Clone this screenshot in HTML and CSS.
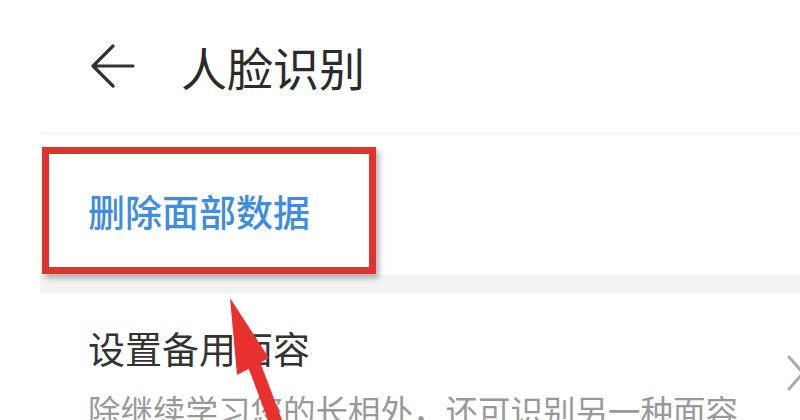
FILE: index.html
```html
<!DOCTYPE html>
<html lang="zh">
<head>
<meta charset="utf-8">
<link rel="stylesheet" href="styles.css">
</head>
<body>
<div class="page">
  <header class="header">
    <svg class="back" width="44" height="46" viewBox="0 0 44 46">
      <path d="M22 3 L2 23 L22 43 M2 23 L42 23" fill="none" stroke="#333" stroke-width="3.2" stroke-linecap="round" stroke-linejoin="round"/>
    </svg>
    <h1 class="title">人脸识别</h1>
  </header>
  <section class="card">
    <div class="action">删除面部数据</div>
  </section>
  <div class="band"></div>
  <section class="row">
    <div class="texts">
      <div class="row-title">设置备用面容</div>
      <div class="row-sub">除继续学习您的长相外，还可识别另一种面容</div>
    </div>
    <svg class="chev" width="18" height="36" viewBox="0 0 18 36">
      <path d="M2 2 L16 18 L2 34" fill="none" stroke="#aaa" stroke-width="3" stroke-linecap="round" stroke-linejoin="round"/>
    </svg>
  </section>
  <div class="highlight"></div>
  <svg class="pointer" width="100" height="140" viewBox="0 0 100 140">
    <polygon points="30,18 37,95 69,78" fill="#e8302c"/>
    <polygon points="47,84 59,79 82,140 68,140" fill="#e8302c"/>
  </svg>
</div>
</body>
</html>
```
FILE: styles.css
```css
html, body {
  margin: 0;
  padding: 0;
  background: #fff;
}
.page {
  position: relative;
  width: 800px;
  height: 420px;
  overflow: hidden;
  font-family: "Noto Sans CJK SC", "Noto Sans", sans-serif;
  background: #fff;
}
.header {
  height: 132px;
  display: flex;
  align-items: center;
  padding-left: 91px;
  box-sizing: border-box;
}
.back {
  display: block;
  margin-right: 46px;
}
.title {
  margin: 0;
  font-size: 46px;
  line-height: 50px;
  font-weight: 400;
  color: #2b2b2b;
}
.card {
  margin-left: 40px;
  height: 143px;
  box-sizing: border-box;
  padding: 54px 0 0 48px;
  border-top: 3px solid #f3fafb;
}
.action {
  font-size: 37px;
  line-height: 44px;
  font-weight: 500;
  color: #3f8de0;
}
.band {
  margin-left: 40px;
  height: 18px;
  background: #f3f3f3;
}
.row {
  margin-left: 40px;
  display: flex;
  justify-content: space-between;
  align-items: flex-start;
  padding: 33px 0 0 48px;
}
.row-title {
  font-size: 37px;
  line-height: 44px;
  color: #333;
}
.row-sub {
  margin-top: 20px;
  font-size: 32.5px;
  line-height: 40px;
  color: #999;
  white-space: nowrap;
}
.chev {
  display: block;
  margin-top: 29px;
  margin-right: -5px;
  flex: none;
}
.highlight {
  position: absolute;
  left: 42px;
  top: 147px;
  width: 334px;
  height: 127px;
  box-sizing: border-box;
  border: 7px solid #e2322f;
  box-shadow: 3px 4px 6px rgba(0, 0, 0, 0.3);
}
.pointer {
  position: absolute;
  left: 200px;
  top: 280px;
}
```
